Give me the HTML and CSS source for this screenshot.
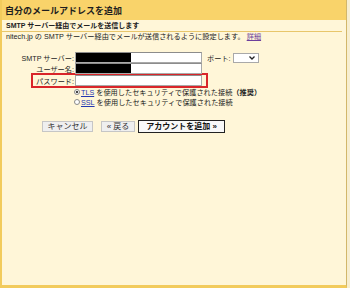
FILE: index.html
```html
<!DOCTYPE html>
<html lang="ja">
<head>
<meta charset="utf-8">
<title>自分のメールアドレスを追加</title>
<link rel="stylesheet" href="styles.css">
</head>
<body>
<div class="frame">
  <div class="head">自分のメールアドレスを追加</div>
  <div class="sub">SMTP サーバー経由でメールを送信します</div>
  <div class="desc">nitech.jp の SMTP サーバー経由でメールが送信されるように設定します。 <a href="#">詳細</a></div>
  <div class="form">
    <div class="row">
      <label><span>SMTP サーバー:</span></label>
      <span class="field"><span class="redact"></span></span>
      <span class="port">ポート:</span>
      <span class="select"><svg width="6" height="4" viewBox="0 0 6 4"><path d="M0.5 0.5 L3 3 L5.5 0.5" fill="none" stroke="#222" stroke-width="1.3"/></svg></span>
    </div>
    <div class="row">
      <label><span>ユーザー名:</span></label>
      <span class="field"><span class="redact"></span></span>
    </div>
    <div class="row pw">
      <label><span>パスワード:</span></label>
      <span class="field"></span>
    </div>
  </div>
  <div class="opts">
    <div class="opt"><span class="radio on"></span><a href="#">TLS</a>を使用したセキュリティで保護された接続<b>（推奨）</b></div>
    <div class="opt"><span class="radio"></span><a href="#">SSL</a>を使用したセキュリティで保護された接続</div>
  </div>
  <div class="buttons">
    <button class="btn cancel">キャンセル</button>
    <button class="btn back">« 戻る</button>
    <button class="btn primary">アカウントを追加 »</button>
  </div>
</div>
</body>
</html>
```
FILE: styles.css
```css
html, body {
  margin: 0;
  padding: 0;
}
body {
  width: 350px;
  height: 288px;
  overflow: hidden;
  background: #f7eed0;
  font-family: "Liberation Sans", "Noto Sans CJK JP", sans-serif;
  color: #222;
}
.frame {
  width: 347px;
  height: 288px;
  box-sizing: border-box;
  border-left: 2px solid #f2cb5c;
  border-bottom: 3px solid #f2cb5c;
  border-right: 1px solid #d2b76a;
  background: #fff6d8;
}
.head {
  height: 20px;
  box-sizing: border-box;
  padding: 3px 0 0 3px;
  background: #f9d36a;
  font-weight: bold;
  font-size: 9px;
  line-height: 16px;
  color: #1e1e1e;
}
.sub {
  height: 11px;
  line-height: 11px;
  font-size: 7px;
  font-weight: bold;
  padding-left: 4px;
  margin-right: 4px;
  border-bottom: 1px solid #e8c66b;
}
.desc {
  height: 9px;
  line-height: 9px;
  font-size: 7.2px;
  padding-left: 4px;
  white-space: nowrap;
}
.desc a {
  color: #6d3f9c;
  text-decoration: underline;
}
.form {
  margin: 11px 0 0 29px;
}
.row {
  display: flex;
  align-items: center;
  height: 11px;
  padding-left: 2px;
}
.row label {
  width: 42px;
  flex: none;
  box-sizing: border-box;
  padding-right: 1px;
  display: flex;
  justify-content: flex-end;
  font-size: 7.2px;
  white-space: nowrap;
}
.row label span {
  flex: none;
}
.field {
  width: 127px;
  height: 11px;
  box-sizing: border-box;
  border: 1px solid #a9a9a9;
  border-top-color: #8c8c8c;
  background: #fff;
  display: flex;
}
.redact {
  width: 55px;
  height: 100%;
  background: #000;
}
.row.pw {
  width: 177px;
  height: 15px;
  box-sizing: border-box;
  margin-top: -1px;
  padding: 0 4px 0 0;
  border: 2px solid #d9252a;
}
.port {
  margin-left: 5px;
  font-size: 7.2px;
  white-space: nowrap;
}
.select {
  width: 26px;
  height: 10px;
  box-sizing: border-box;
  margin-left: 2px;
  border: 1px solid #a9a9a9;
  background: #fff;
  display: flex;
  justify-content: flex-end;
  align-items: center;
  padding-right: 3px;
}
.opts {
  margin: -1px 0 0 72px;
  font-size: 7.2px;
}
.opt {
  height: 10px;
  display: flex;
  align-items: center;
  white-space: nowrap;
}
.radio {
  width: 6px;
  height: 6px;
  box-sizing: border-box;
  border-radius: 50%;
  border: 1px solid #8a8a8a;
  background: #fff;
  margin-right: 1px;
}
.radio.on {
  background: radial-gradient(circle, #444 0 1.3px, #fff 1.6px);
}
.opt a {
  color: #2437b0;
  text-decoration: underline;
  margin-right: 2px;
}
.opt b {
  font-weight: bold;
}
.buttons {
  display: flex;
  align-items: center;
  margin: 13px 0 0 40px;
}
.btn {
  font-family: inherit;
  font-size: 8px;
  height: 11px;
  box-sizing: border-box;
  padding: 0;
  margin: 0;
  border: 1px solid #c6c6c6;
  background: #efefef;
  color: #333;
  line-height: 9px;
  white-space: nowrap;
}
.cancel {
  width: 51px;
}
.back {
  width: 34px;
  margin-left: 8px;
}
.primary {
  width: 87px;
  height: 13px;
  margin-left: 3px;
  border: 1px solid #222;
  background: #f8f8f8;
  color: #111;
  font-weight: bold;
}
```
